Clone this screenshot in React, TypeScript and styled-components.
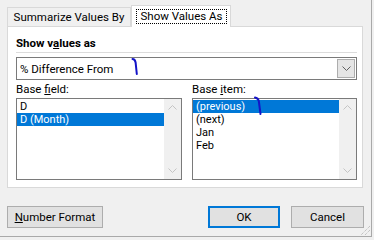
import React from 'react';
import styled, { createGlobalStyle } from 'styled-components';

const GlobalStyle = createGlobalStyle`
  html, body {
    margin: 0;
    padding: 0;
    background: #f0f0f0;
  }
  body {
    font-family: Roboto, "Noto Sans", sans-serif;
    font-size: 11.5px;
    color: #000;
  }
`;

const Dialog = styled.div`
  position: relative;
  box-sizing: border-box;
  width: 372px;
  height: 237px;
  padding: 5px 0 0 7px;
  background: #f0f0f0;
  border-right: 1px solid #a9a9a9;
  border-bottom: 1px solid #a9a9a9;
  overflow: hidden;
`;

const TabStrip = styled.div`
  display: flex;
  align-items: flex-end;
  height: 21px;
`;

const Tab = styled.div<{ $active?: boolean; $width: number }>`
  position: relative;
  z-index: ${p => (p.$active ? 1 : 0)};
  box-sizing: border-box;
  width: ${p => p.$width}px;
  height: ${p => (p.$active ? 22 : 19)}px;
  margin-bottom: ${p => (p.$active ? -1 : 0)}px;
  display: flex;
  align-items: center;
  justify-content: center;
  background: ${p => (p.$active ? '#fff' : '#f0f0f0')};
  border: 1px solid #d9d9d9;
  border-bottom: none;
  line-height: 13px;
  white-space: nowrap;
`;

const FocusRect = styled.span`
  padding: 0 3px 0 4px;
  border: 1px dotted #000;
  margin-top: -1px;
`;

const Panel = styled.div`
  box-sizing: border-box;
  width: 356px;
  padding: 8px 5px 7px 8px;
  background: #fff;
  border: 1px solid #d9d9d9;
`;

const Heading = styled.div`
  font-weight: 700;
  line-height: 16px;
`;

const Separator = styled.div`
  height: 0;
  margin: 1px 0 4px;
  border-top: 1px solid #dcdcdc;
`;

const Combo = styled.div`
  box-sizing: border-box;
  display: flex;
  height: 23px;
  border: 1px solid #7a7a7a;
  background: #fff;
`;

const ComboText = styled.div`
  flex: 1;
  display: flex;
  align-items: center;
  padding-left: 3px;
`;

const ComboButton = styled.div`
  box-sizing: border-box;
  width: 18px;
  margin: 1px;
  display: flex;
  align-items: center;
  justify-content: center;
  background: #e5e5e5;
  border: 1px solid #adadad;
`;

const Columns = styled.div`
  display: grid;
  grid-template-columns: 166px 165px;
  gap: 10px;
`;

const Column = styled.div`
  display: flex;
  flex-direction: column;
`;

const Label = styled.div`
  line-height: 16px;
  margin: 1px 0 1px;
`;

const ListBox = styled.div`
  box-sizing: border-box;
  height: 82px;
  display: flex;
  border: 1px solid #7a7a7a;
  background: #fff;
`;

const Items = styled.div`
  flex: 1;
  padding-top: 1px;
`;

const Item = styled.div<{ $selected?: boolean }>`
  height: 13px;
  font-size: 11px;
  line-height: 13px;
  padding-left: 3px;
  white-space: nowrap;
  background: ${p => (p.$selected ? '#0078d7' : 'transparent')};
  color: ${p => (p.$selected ? '#fff' : '#000')};
`;

const ScrollBar = styled.div`
  width: 17px;
  display: flex;
  flex-direction: column;
  justify-content: space-between;
  background: #f0f0f0;
`;

const ScrollArrow = styled.div`
  height: 17px;
  display: flex;
  align-items: center;
  justify-content: center;
`;

const Footer = styled.div`
  display: flex;
  gap: 11px;
  width: 357px;
  margin-top: 18px;
`;

const Button = styled.button<{ $width: number; $default?: boolean }>`
  box-sizing: border-box;
  width: ${p => p.$width}px;
  height: 22px;
  padding: 0;
  font: inherit;
  color: #000;
  background: #e1e1e1;
  border: ${p => (p.$default ? '2px solid #0078d7' : '1px solid #adadad')};
  &:first-child {
    margin-right: auto;
  }
`;

const Overlay = styled.svg`
  position: absolute;
  left: 0;
  top: 0;
  pointer-events: none;
`;

const Chevron = ({ up, color }: { up?: boolean; color: string }) => (
  <svg width="9" height="5" viewBox="0 0 9 5">
    <polyline
      points={up ? '0.5,4.5 4.5,0.5 8.5,4.5' : '0.5,0.5 4.5,4.5 8.5,0.5'}
      fill="none"
      stroke={color}
      strokeWidth="1"
    />
  </svg>
);

const List = ({ items, selected }: { items: string[]; selected: number }) => (
  <ListBox>
    <Items>
      {items.map((it, i) => (
        <Item key={it} $selected={i === selected}>
          {it}
        </Item>
      ))}
    </Items>
    <ScrollBar>
      <ScrollArrow>
        <Chevron up color="#c4c4c4" />
      </ScrollArrow>
      <ScrollArrow>
        <Chevron color="#c4c4c4" />
      </ScrollArrow>
    </ScrollBar>
  </ListBox>
);

export default function App() {
  return (
    <>
      <GlobalStyle />
      <Dialog>
        <TabStrip>
          <Tab $width={124}>Summarize Values By</Tab>
          <Tab $active $width={100}>
            <FocusRect>Show Values As</FocusRect>
          </Tab>
        </TabStrip>
        <Panel>
          <Heading>
            Show v<u>a</u>lues as
          </Heading>
          <Separator />
          <Combo>
            <ComboText>% Difference From</ComboText>
            <ComboButton>
              <Chevron color="#606060" />
            </ComboButton>
          </Combo>
          <Columns>
            <Column>
              <Label>
                Base <u>f</u>ield:
              </Label>
              <List items={['D', 'D (Month)']} selected={1} />
            </Column>
            <Column>
              <Label>
                Base <u>i</u>tem:
              </Label>
              <List items={['(previous)', '(next)', 'Jan', 'Feb']} selected={0} />
            </Column>
          </Columns>
        </Panel>
        <Footer>
          <Button $width={96}>
            <u>N</u>umber Format
          </Button>
          <Button $width={72} $default>
            OK
          </Button>
          <Button $width={73}>Cancel</Button>
        </Footer>
        <Overlay width="372" height="237" viewBox="0 0 372 237">
          <path d="M132.5 59 Q135 59 135.6 62.5 L136.8 74" fill="none" stroke="#1414c8" strokeWidth="2" strokeLinecap="round" />
          <path d="M255 97.5 Q258 98 258.8 101 L260.5 114" fill="none" stroke="#1414c8" strokeWidth="2" strokeLinecap="round" />
          <g stroke="#b0b0b0" strokeWidth="1">
            <line x1="370" y1="226" x2="361" y2="235" strokeDasharray="1 1" />
            <line x1="370" y1="230" x2="365" y2="235" strokeDasharray="1 1" />
          </g>
        </Overlay>
      </Dialog>
    </>
  );
}
